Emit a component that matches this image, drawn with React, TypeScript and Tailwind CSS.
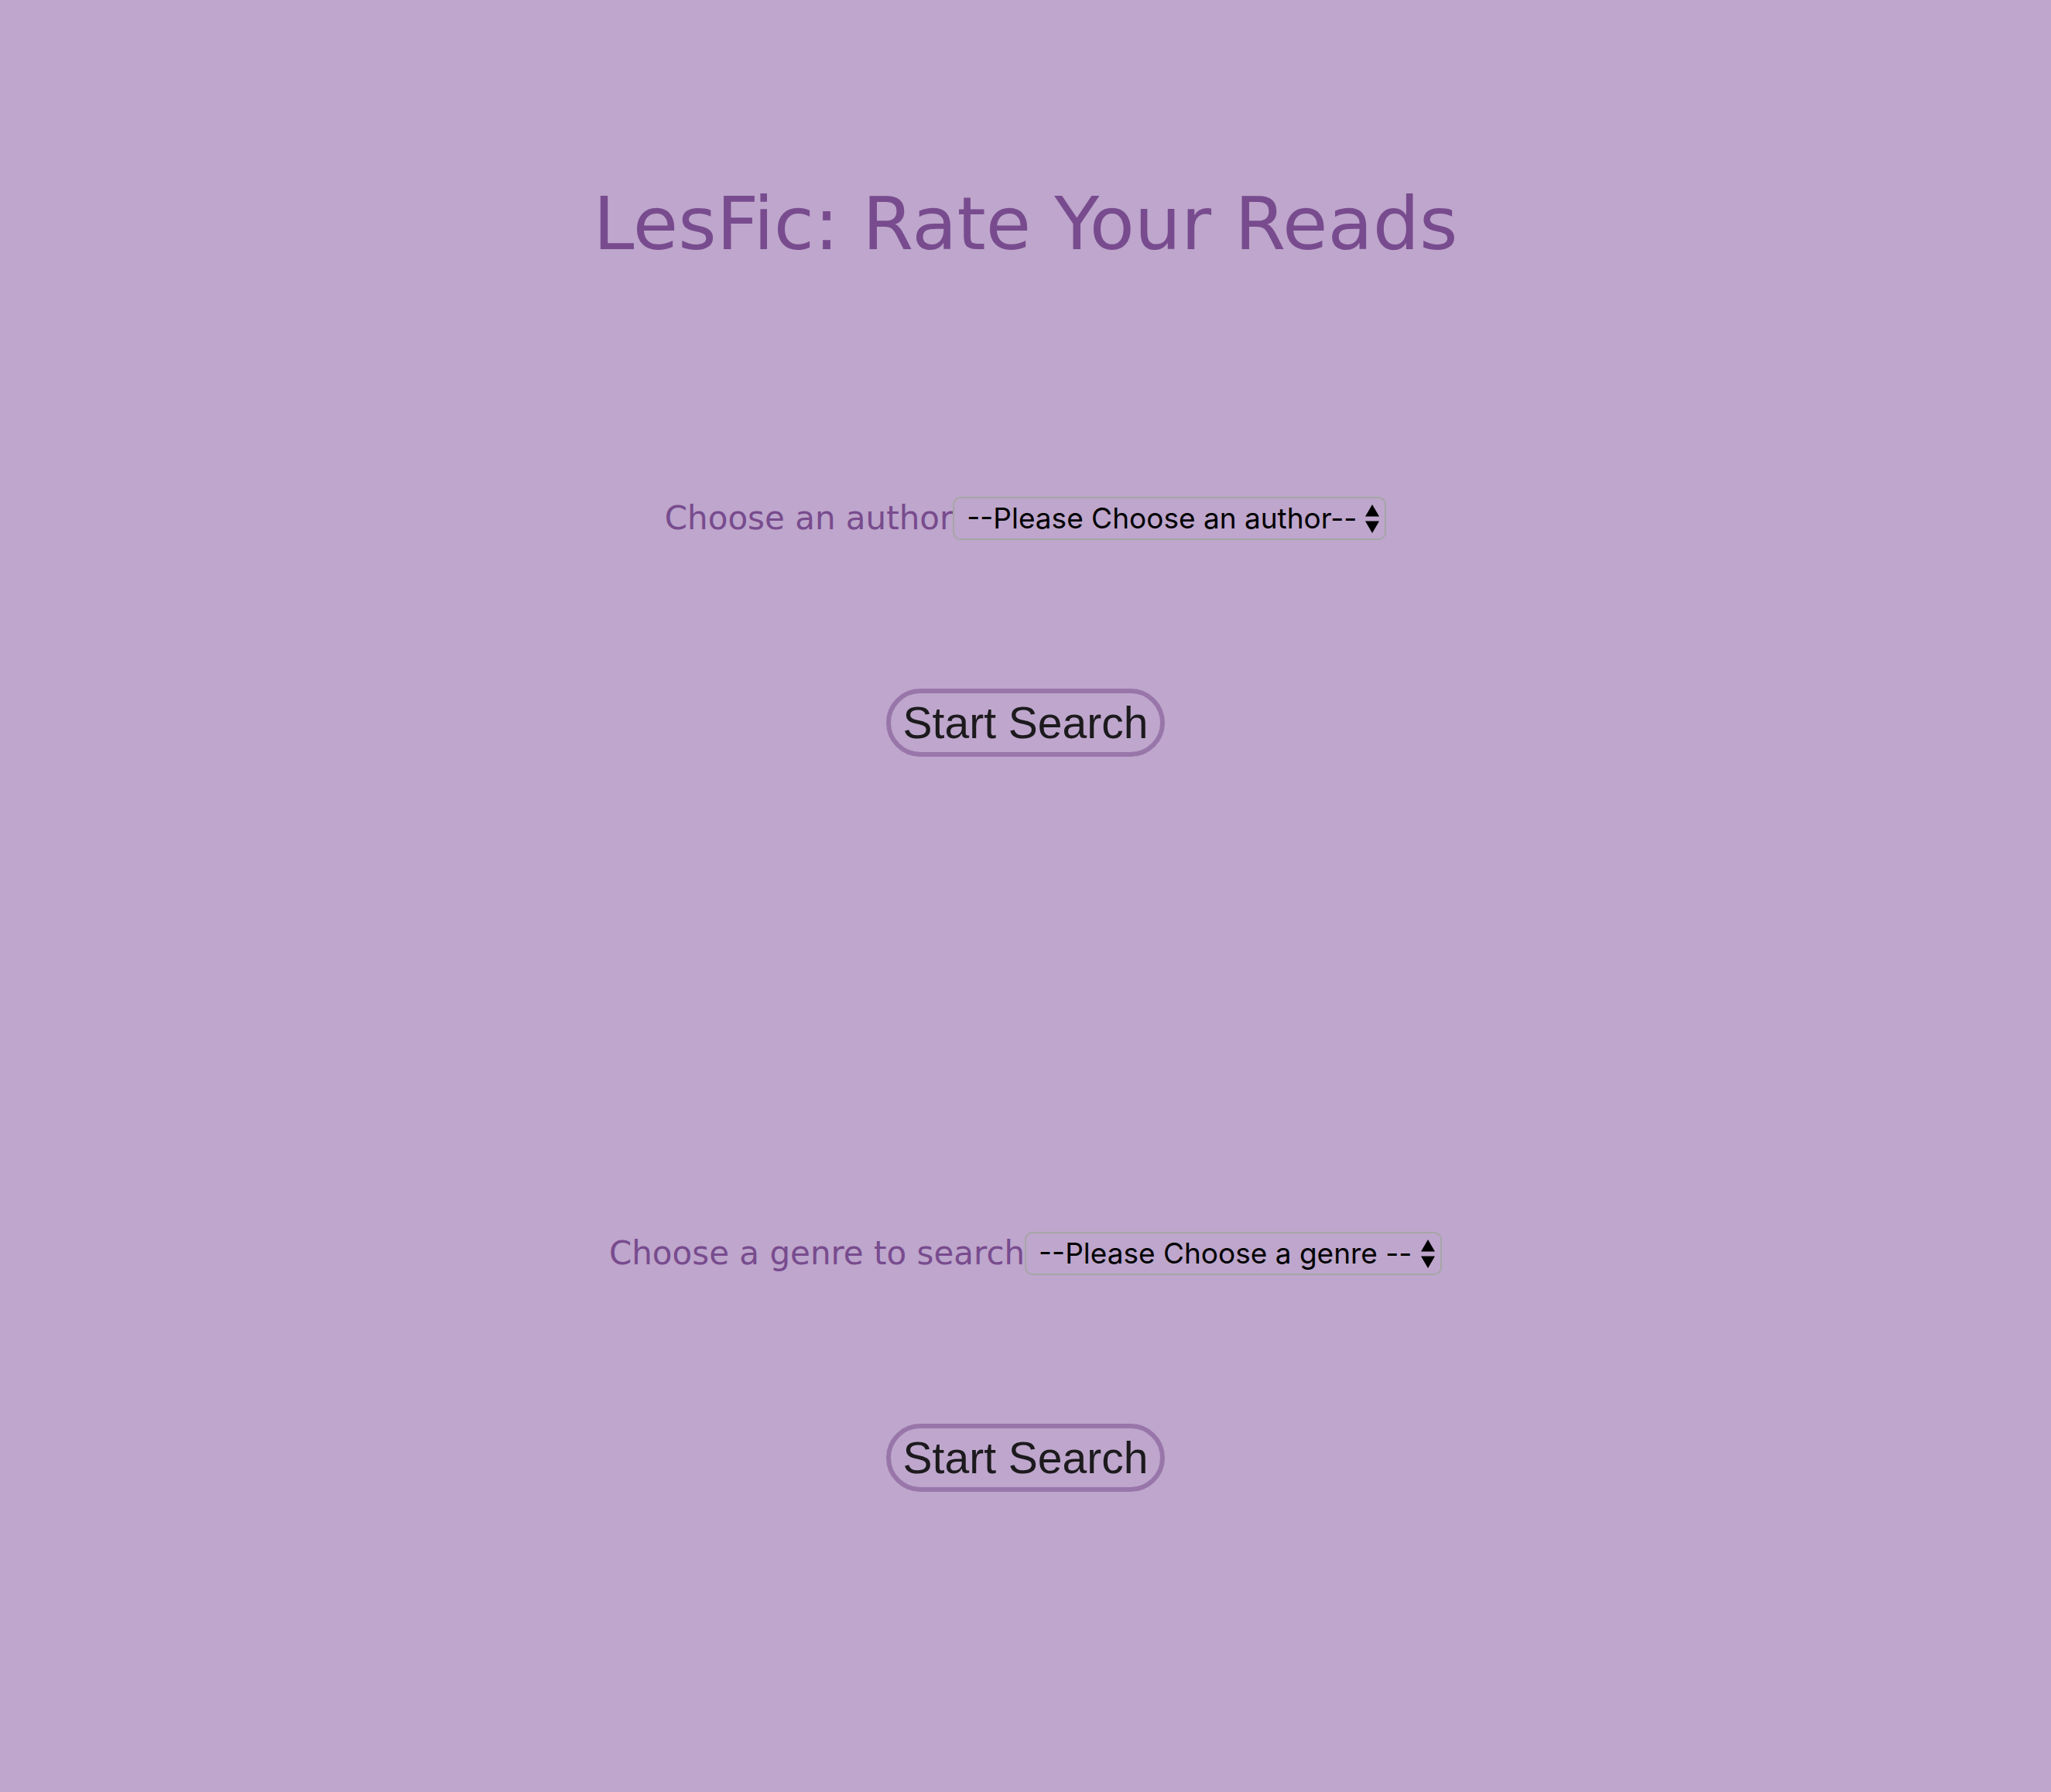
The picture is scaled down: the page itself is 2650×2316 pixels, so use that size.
type SearchProps = {
  id: string;
  label: string;
  placeholder: string;
};

function SelectArrows() {
  return (
    <svg
      className="pointer-events-none absolute right-2 top-2 h-10 w-5"
      viewBox="0 0 20 40"
      aria-hidden="true"
    >
      <path d="M10 2 L19 17.5 H1 Z" fill="#000" />
      <path d="M10 39 L19 23.5 H1 Z" fill="#000" />
    </svg>
  );
}

function SearchForm({ id, label, placeholder }: SearchProps) {
  return (
    <form
      className="flex flex-col items-center gap-48"
      onSubmit={(event) => event.preventDefault()}
    >
      <div className="flex items-center">
        <label
          htmlFor={id}
          className="font-['DejaVu_Sans',sans-serif] text-[42px] leading-14 text-[#784b8e]"
        >
          {label}
        </label>
        <div className="relative">
          <select
            id={id}
            className="block h-14 appearance-none rounded-[10px] border-2 border-[#a6a6a6] bg-transparent pr-9 pl-4 font-['Inter',sans-serif] text-[37px] leading-12 text-black"
          >
            <option>{placeholder}</option>
          </select>
          <SelectArrows />
        </div>
      </div>
      <button
        type="submit"
        className="h-[88px] rounded-full border-6 border-[#9976aa] px-4 font-['Liberation_Sans',sans-serif] text-[57px] leading-[76px] text-[#1c1a1d]"
      >
        Start Search
      </button>
    </form>
  );
}

export default function App() {
  return (
    <main className="flex min-h-screen flex-col items-center bg-[#bea6cc] pt-[234px] pb-48">
      <h1 className="font-['DejaVu_Sans',sans-serif] text-[95px] leading-[110px] text-[#784b8e]">
        LesFic: Rate Your Reads
      </h1>
      <div className="mt-[298px] flex flex-col gap-[614px]">
        <SearchForm
          id="author"
          label="Choose an author"
          placeholder="--Please Choose an author--"
        />
        <SearchForm
          id="genre"
          label="Choose a genre to search"
          placeholder="--Please Choose a genre --"
        />
      </div>
    </main>
  );
}
